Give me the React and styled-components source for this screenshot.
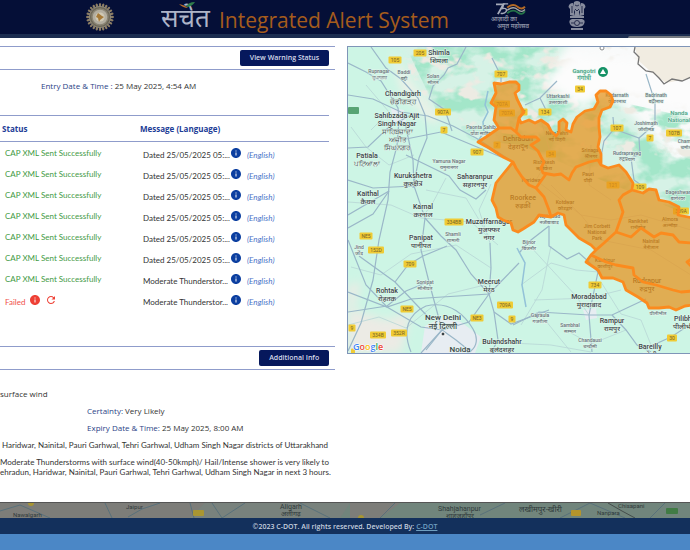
import React from 'react'
import styled, { createGlobalStyle } from 'styled-components'
import { MdInfo, MdRefresh } from 'react-icons/md'

const GlobalStyle = createGlobalStyle`
  * {
    box-sizing: border-box;
  }

  body {
    margin: 0;
    background-color: #4b87c6;
    font-family: 'Open Sans', 'Noto Sans', sans-serif;
    font-size: 8px;
    color: #333;
    overflow-x: hidden;
  }
`

const TopBar = styled.header`
  display: flex;
  align-items: flex-start;
  height: 34px;
  padding-left: 85px;
  background-color: #050f37;
`

const Brand = styled.div`
  display: flex;
  align-items: center;
  height: 34px;
  margin-left: 46px;
  gap: 8px;
`

const Title = styled.h1`
  margin: 0;
  padding-top: 5px;
  font-size: 21px;
  font-weight: 400;
  line-height: 28px;
  white-space: nowrap;
  color: #a55c1c;
`

const Campaign = styled.div`
  display: flex;
  flex-flow: column;
  width: 46px;
  margin-left: 41px;
  padding-top: 2px;
  font-size: 6px;
  font-weight: 600;
  line-height: 7px;
  white-space: nowrap;
  color: #8d93a5;
`

const CampaignLine = styled.span`
  padding-left: ${(props) => (props.$indent ? 7 : 1)}px;
`

const EmblemBox = styled.div`
  margin-left: 32px;
`

const SubBar = styled.div`
  display: flex;
  justify-content: flex-end;
  align-items: flex-end;
  height: 4px;
  background-color: #1c2d50;
`

const Tab = styled.div`
  width: 9%;
  height: 2px;
  border-top-left-radius: 2px;
  background-color: #777b82;
`

const Panel = styled.main`
  display: grid;
  grid-template-columns: minmax(0, 44fr) minmax(0, 45fr);
  column-gap: 12px;
  padding: 8px 0 24px;
  background-color: #fff;
`

const Details = styled.div`
  display: flex;
  flex-flow: column;
  overflow: hidden;
`

const Section = styled.div`
  display: flex;
  justify-content: flex-end;
  align-items: center;
  height: 24px;
  padding-right: 6px;
  border-top: 1px solid #8f9ccb;
  border-bottom: 1px solid #8f9ccb;
`

const Button = styled.button`
  height: 16px;
  padding: 0 10px;
  border: 0;
  border-radius: 2px;
  background-color: #06185c;
  font-family: inherit;
  font-size: 7px;
  font-weight: 600;
  line-height: 16px;
  white-space: nowrap;
  color: #d5daea;
  cursor: pointer;
`

const Entry = styled.div`
  padding: 11px 0 24px 41px;
  line-height: 10px;
`

const Label = styled.span`
  color: #2b3f86;
`

const StatusTable = styled.table`
  width: calc(100% - 6px);
  table-layout: fixed;
  border-collapse: collapse;
  text-align: left;
`

const HeadCell = styled.th`
  width: ${(props) => props.$width};
  height: 26px;
  padding: 0 0 0 ${(props) => (props.$first ? 2 : 0)}px;
  border-top: 1px solid #8f9ccb;
  border-bottom: 1px solid #8f9ccb;
  font-size: 8px;
  font-weight: 700;
  color: #1c3c96;
`

const Cell = styled.td`
  height: 21px;
  padding: 0 0 0 ${(props) => (props.$first ? 5 : 3)}px;
`

const CellRow = styled.div`
  display: flex;
  align-items: center;
  height: 21px;
  font-family: Lato, 'Open Sans', sans-serif;
  line-height: 10px;
  white-space: nowrap;
`

const Status = styled.span`
  padding-top: ${(props) => (props.$failed ? 4 : 0)}px;
  color: ${(props) => (props.$failed ? '#f0504a' : '#3f9a45')};
`

const Message = styled.span`
  width: 85px;
  padding-top: 4px;
`

const Language = styled.i`
  padding-top: 4px;
  color: #4a74c8;
`

const IconButton = styled.button`
  display: flex;
  padding: 0;
  margin: 0 ${(props) => (props.$failed ? 0 : 5)}px 0 ${(props) => (props.$failed ? 4 : 2)}px;
  border: 0;
  background-color: transparent;
  font-size: 12px;
  color: ${(props) => (props.$failed ? '#ee4035' : '#0c3fa0')};
  cursor: pointer;
`

const TableEnd = styled.div`
  height: 36px;
`

const Info = styled.div`
  display: flex;
  flex-flow: column;
  gap: 7px;
  padding-top: 19px;
  line-height: 10px;
  white-space: nowrap;
`

const Field = styled.div`
  padding-left: ${(props) => (props.$inset ? 87 : 0)}px;
`

const Prose = styled.div`
  padding-left: ${(props) => (props.$inset ? 2 : 0)}px;
  font-family: Lato, 'Open Sans', sans-serif;
`

const MapFrame = styled.div`
  height: 308px;
  margin-bottom: 124px;
  border: 1px solid #7f95b8;
  border-right: 0;
  overflow: hidden;
`

const MapSvg = styled.svg`
  display: block;
  width: 100%;
  height: 100%;
`

const BackdropMap = styled.div`
  height: 16px;
  border-top: 1px solid #555;
  background-color: #71857c;
`

const Footer = styled.footer`
  height: 16px;
  background-color: #13305c;
  font-size: 7px;
  text-align: center;
  font-weight: 600;
  line-height: 18px;
  color: #c5cfdf;
`

const FooterLink = styled.a`
  color: #6f9fc0;
`

const rows = [
  'Dated 25/05/2025 05:...',
  'Dated 25/05/2025 05:...',
  'Dated 25/05/2025 05:...',
  'Dated 25/05/2025 05:...',
  'Dated 25/05/2025 05:...',
  'Dated 25/05/2025 05:...',
  'Moderate Thunderstor...',
  'Moderate Thunderstor...',
]

// [x, y, size, ...lines]
const cities = [
  [438, 55, 7, 'Shimla', 'शिमला'],
  [402, 96, 7, 'Chandigarh', 'ਚੰਡੀਗੜ੍ਹ'],
  [396, 118, 7, 'Sahibzada Ajit', 'Singh Nagar', 'ਸਾਹਿਬਜ਼ਾਦਾ', 'ਅਜੀਤ', 'ਸਿੰਘ ਨਗਰ'],
  [366, 158, 7, 'Patiala', 'ਪਟਿਆਲਾ'],
  [412, 178, 7, 'Kurukshetra', 'कुरुक्षेत्र'],
  [474, 179, 7, 'Saharanpur', 'सहारनपुर'],
  [367, 196, 7, 'Kaithal', 'कैथल'],
  [422, 209, 7, 'Karnal', 'करनाल'],
  [488, 224, 7, 'Muzaffarnagar', 'मुजफ्फर', 'नगर'],
  [420, 240, 7, 'Panipat', 'पानीपत'],
  [386, 293, 7, 'Rohtak', 'रोहतक'],
  [488, 284, 7, 'Meerut', 'मेरठ'],
  [442, 320, 8, 'New Delhi', 'नई दिल्ली'],
  [459, 352, 8, 'Noida'],
  [501, 344, 7, 'Bulandshahr', 'बुलंदशहर'],
  [588, 299, 7, 'Moradabad', 'मुरादाबाद'],
  [611, 323, 7, 'Rampur', 'रामपुर'],
  [649, 349, 7, 'Bareilly', 'बरेली'],
  [684, 321, 7, 'Pilibhit', 'पीलीभीत'],
]

const towns = [
  [378, 73, 'Rupnagar', 'ਰੂਪਨਗਰ'],
  [403, 74, 'Baddi', 'बद्दी'],
  [432, 78, 'Solan', 'सोलन'],
  [480, 129, 'Paonta Sahib', 'पोंटा साहिब'],
  [448, 163, 'Yamuna Nagar', 'यमुनानगर'],
  [358, 249, 'Jind', 'जींद'],
  [452, 236, 'Shamli', 'शामली'],
  [424, 284, 'Sonipat', 'सोनीपत'],
  [528, 244, 'Bijnor', 'बिजनौर'],
  [548, 218, 'Najibabad', 'नजीबाबाद'],
  [539, 317, 'Gajraula', 'गजरौला'],
  [569, 327, 'Sambhal', 'सम्भल'],
  [589, 342, 'Chandausi', 'चन्दौसी'],
  [657, 315, 'पीलीभीत'],
  [557, 98, 'Uttarkashi', 'उत्तरकाशी'],
  [616, 97, 'Kedarnath', 'केदारनाथ'],
  [655, 97, 'Badrinath', 'बद्रीनाथ'],
  [645, 125, 'Joshimath', 'जोशीमठ'],
  [626, 155, 'Rudraprayag', 'रुद्रप्रयाग'],
  [677, 194, 'Bageshwar', 'बागेश्वर'],
  [686, 143, 'Chamoli', 'चमोली'],
]

// names that sit below the warning overlay
const coveredNames = [
  [517, 141, 7, 'Dehradun', 'देहरादून'],
  [522, 200, 7, 'Roorkee', 'रुड़की'],
  [556, 135, 5, 'New Tehri', 'नई टिहरी'],
  [543, 164, 5, 'Rishikesh', 'ऋषिकेश'],
  [590, 152, 5, 'Srinagar', 'श्रीनगर'],
  [587, 176, 5, 'Pauri', 'पौड़ी'],
  [531, 182, 5, 'Haridwar'],
  [564, 204, 5, 'Kotdwar', 'कोटद्वार'],
  [596, 228, 5, 'Jim Corbett', 'National', 'Park'],
  [637, 223, 5, 'Ranikhet', 'रानीखेत'],
  [669, 221, 5, 'Almora', 'अल्मोड़ा'],
  [650, 243, 5, 'Nainital', 'नैनीताल'],
  [604, 262, 5, 'Kashipur', 'काशीपुर'],
  [646, 283, 7, 'Rudrapur', 'रुद्रपुर'],
]

const shields = [
  [419, 53, '205'], [394, 60, '105'], [500, 74, '707'], [442, 112, '907A'],
  [443, 130, '7'], [476, 152, '907'], [579, 89, '34'], [544, 112, '134'],
  [616, 128, '107'], [649, 138, '7'], [673, 133, '107B'], [639, 187, '109'],
  [501, 104, '707A'], [506, 113, '707A'], [496, 145, '7'], [550, 154, '34'],
  [612, 185, '121'], [523, 112, '7'], [453, 222, '334BB'], [365, 236, 'NE5'],
  [375, 250, '152D'], [409, 264, '709'], [406, 309, 'NE5'], [476, 318, 'NE3'],
  [504, 305, '709A'], [511, 319, '9'], [377, 335, '334B'], [398, 333, '352R'],
  [351, 328, '9'], [352, 352, ''], [594, 285, '734'], [671, 338, '30'],
  [680, 211, '309A'],
]

const boundary =
  'M493 83 L500 84 L508 82 L515 82 L518 85 L518 90 L514 93 L516 99 L520 107 L523 112 L518 118 L520 123 L528 120 L534 123 L540 120 L547 125 L550 131 L555 136 L558 132 L558 122 L562 119 L566 123 L565 130 L570 132 L572 124 L576 117 L584 111 L593 109 L597 102 L595 95 L599 91 L605 91 L610 95 L612 101 L609 107 L601 110 L598 118 L598 127 L599 137 L597 147 L600 154 L600 165 L607 168 L618 165 L625 172 L632 183 L631 190 L642 193 L648 189 L655 190 L658 200 L668 202 L678 207 L677 215 L692 218 L692 305 L684 306 L675 310 L668 307 L658 308 L648 308 L646 303 L637 297 L625 290 L622 282 L612 278 L601 278 L597 270 L585 262 L590 255 L595 250 L590 245 L578 238 L565 225 L563 215 L557 213 L550 217 L538 215 L533 222 L522 229 L517 232 L512 230 L510 223 L502 220 L497 217 L495 208 L491 200 L495 183 L503 173 L512 162 L502 157 L488 148 L477 142 L485 137 L498 128 L493 120 L495 107 L490 103 L495 93 Z'

const districts =
  'M498 128 L510 128 L515 132 L518 118 M515 132 L520 137 L535 137 L538 140 L530 145 L537 151 L540 157 L543 162 L540 168 L542 173 L553 175 L560 174 L568 180 L571 173 L575 167 L588 162 L597 160 L600 165 M512 162 L515 168 L521 177 L528 185 L535 188 L540 181 L545 174 M535 188 L543 197 L548 210 L550 217 M631 190 L622 195 L618 200 L622 212 L615 232 L603 243 L595 250 M615 232 L630 237 L640 228 L653 237 L660 233 L672 235 L678 242 L692 243 M590 255 L605 262 L615 265 L632 268 L633 275 L642 282 L655 285 L672 290 L680 292 L692 291 M692 258 L686 262 L692 268'

const roads = [
  'M347 63 L365 72 L380 81 L397 108 L398 118',
  'M347 95 L372 99 L400 112 L427 116 L452 126 L475 138 L512 162',
  'M370 47 L385 68 L400 79 L417 98 L424 115 L426 138 L418 158 L412 188',
  'M398 120 L396 146 L389 172 L387 200 L378 240 L372 280 L360 323 L347 351',
  'M404 123 L412 160 L413 186 L424 218 L420 250 L428 282 L441 330',
  'M424 218 L440 236 L455 250 L470 274 L488 294 L493 312 L497 340',
  'M488 294 L468 322 L441 330 L425 350 M488 294 L518 263',
  'M489 243 L490 268 L488 294 L410 299 L386 307 L347 292',
  'M347 228 L372 214 L388 191 M347 240 L365 285 L386 307 L420 327 L441 330',
  'M347 312 L386 306 L405 291 L427 282 M358 256 L394 282 L430 320',
  'M394 282 L407 265 L422 256 L446 246 M347 180 L372 188 L413 186',
  'M347 148 L367 147 L388 127 L410 115 M400 140 L440 132',
  'M410 352 C401 330 407 314 425 306 C450 300 465 317 472 329 S474 350 466 353',
  'M512 325 L538 312 L588 315 L611 315 L645 299 M588 315 L591 352',
  'M611 315 L625 330 L636 345 L650 352 M650 346 L670 337 L690 324',
  'M548 226 L548 246 L566 259 L578 253 L588 262 L597 272 L588 315',
  'M548 226 L530 240 L518 253 M493 312 L510 324 L548 310',
  'M465 47 L456 64 L447 68 L443 75 L432 86 L428 99 L444 110 L451 131',
  'M491 58 L500 76 L500 82 M524 105 L539 98 L556 81 M539 98 L548 116',
  'M612 117 L613 129 L603 141 L600 157 M613 129 L638 138 L654 124 L654 102 L645 74',
  'M638 138 L639 154 L630 158 L633 180 L647 190',
  'M388 191 L347 215 M440 132 L500 157 M405 155 L448 176 L459 190 L475 199 L485 190',
  'M497 340 L490 353 M441 330 L455 340 L470 352 M441 330 L420 353',
]

const minorRoads =
  'M347 202 L390 205 L420 218 L470 222 L497 245 M350 267 L380 275 L410 254 L455 245 L490 268 M425 190 L465 198 L490 240 M347 325 L378 317 L405 328 L447 294 L500 281 M528 245 L575 296 L588 315 M520 285 L550 263 L575 270 L597 272 M550 246 L541 290 L520 325 M600 282 L620 314 L640 320 L650 345 M570 333 L590 344 L625 330 M350 127 L365 147 L388 165 L413 155 M445 178 L430 206 L420 218 M365 85 L388 112 L370 130 M533 300 L588 298 L620 290 M540 315 L570 352 M510 343 L550 345 L590 352 M490 184 L478 210 L489 243 M550 185 L580 215 L610 220 L640 215 L690 230 M540 120 L550 155 L535 180 L580 215 M580 215 L600 240 L650 250 L690 275 M590 145 L588 185 L610 200'

function Wheel() {
  const spokes = Array.from({ length: 24 }, (_, i) => i * 15)
  return (
    <svg width="30" height="34" viewBox="-15 -17 30 34" aria-hidden="true">
      {spokes.map((angle) => (
        <ellipse
          key={angle}
          cx="0"
          cy="-12"
          rx="1.2"
          ry="2"
          fill="#8c7d64"
          transform={`rotate(${angle})`}
        />
      ))}
      <circle r="10.6" fill="#6d6858" stroke="#8f897a" strokeWidth="1" />
      <circle r="8" fill="#b3aea0" stroke="#8a8474" strokeWidth="1.4" />
      <circle r="4.6" fill="#d0c9b4" />
      <path d="M-2 -4 L2 -1 L4 0 L0 3 L-1 5 L-2 1 L-4 0 Z" fill="#a67a38" />
    </svg>
  )
}

function SachetLogo() {
  return (
    <svg width="50" height="34" viewBox="0 0 50 34" role="img" aria-label="सचेत">
      <text x="0" y="27" fontSize="26" fill="#aeb4c8" fontFamily="Noto Sans, sans-serif">
        सचेत
      </text>
      <path d="M18 4 Q24 5 27 8 Q22 8 18 4Z" fill="#b36a2c" />
      <path d="M25 7 Q27 2 34 2 Q31 7 25 7Z" fill="#2f7d4b" />
    </svg>
  )
}

function AzadiMark() {
  return (
    <svg width="40" height="14" viewBox="0 0 40 15" aria-hidden="true">
      <path d="M5 2.500 H13 L7 13" fill="none" stroke="#a6abba" strokeWidth="2" />
      <path d="M18 2 H13 L12 7 Q17 6 16 10 Q14 13 10 12" fill="none" stroke="#a6abba" strokeWidth="1.500" />
      <path d="M17 6 Q23 1 28 5 T36 5" fill="none" stroke="#b46a25" strokeWidth="2" />
      <path d="M17 9 Q23 4 28 8 T36 8" fill="none" stroke="#a9aaa8" strokeWidth="1.500" />
      <path d="M17 12 Q23 7 28 11 T36 10" fill="none" stroke="#247348" strokeWidth="2" />
    </svg>
  )
}

function Emblem() {
  return (
    <svg width="18" height="32" viewBox="0 0 18 32" aria-hidden="true">
      <g fill="#878c9e">
        <path d="M6 2 Q9 0 12 2 L13 7 L11 12 L12 16 H6 L7 12 L5 7Z" />
        <path d="M5 3 Q1 3 0.500 7 L2 9 L2 15 L6 16 L6 8Z" />
        <path d="M13 3 Q17 3 17.500 7 L16 9 L16 15 L12 16 L12 8Z" />
        <rect x="2" y="16" width="14" height="2" />
        <path d="M4 19 Q0 20 2 24 Q3 27 9 27 Q15 27 16 24 Q18 20 14 19Z" />
        <rect x="3" y="28" width="12" height="2" />
      </g>
      <g stroke="#10183b" strokeWidth="0.800" fill="none">
        <path d="M7 5 L9 6 L11 5 M7 9 L9 11 L11 9 M4 6 V13 M14 6 V13" />
        <circle cx="9" cy="23" r="2.500" />
        <path d="M3 23 H6 M12 23 H15" />
      </g>
    </svg>
  )
}

function MapLabel({ x, y, size, lines, color, halo = '#e3f5ed' }) {
  return (
    <text
      textAnchor="middle"
      fontSize={size}
      fontWeight="500"
      fontFamily="Roboto, Noto Sans, sans-serif"
      fill={color}
      stroke={halo}
      strokeWidth="1"
      paintOrder="stroke"
    >
      {lines.map((line, i) => (
        <tspan key={i} x={x} y={y + i * (size + 1)}>
          {line}
        </tspan>
      ))}
    </text>
  )
}

function Shield({ x, y, label }) {
  const width = label.length * 3 + 4
  return (
    <g>
      <rect x={x - width / 2} y={y - 3.5} width={width} height="7" rx="1" fill="#f0cb35" />
      <text
        x={x}
        y={y + 2}
        fontSize="5"
        fontFamily="Roboto, sans-serif"
        fill="#756427"
        textAnchor="middle"
      >
        {label}
      </text>
    </g>
  )
}

function WarningMap() {
  return (
    <MapSvg viewBox="347 47 343 306" preserveAspectRatio="xMinYMin slice">
      <defs>
        <filter id="forest" x="0" y="0" width="1" height="1" colorInterpolationFilters="sRGB">
          <feTurbulence type="fractalNoise" baseFrequency="0.03 0.045" numOctaves="4" seed="8" />
          <feColorMatrix values="0 0 0 0 0.64  0 0 0 0 0.9  0 0 0 0 0.79  5 0 0 0 -2.2" />
          <feComposite operator="in" in2="SourceGraphic" />
        </filter>
        <filter id="ridge" x="0" y="0" width="1" height="1" colorInterpolationFilters="sRGB">
          <feTurbulence type="fractalNoise" baseFrequency="0.05 0.07" numOctaves="3" seed="21" />
          <feColorMatrix values="0 0 0 0 0.93  0 0 0 0 0.92  0 0 0 0 0.89  0 7 0 0 -3.9" />
          <feComposite operator="in" in2="SourceGraphic" />
        </filter>
        <filter id="snow" x="-0.1" y="-0.1" width="1.2" height="1.2">
          <feGaussianBlur stdDeviation="5" />
        </filter>
      </defs>
      <rect x="347" y="47" width="343" height="306" fill="#cdf5e5" />
      <path d="M396 40 L700 40 V220 L600 180 L520 145 L470 140 L430 112Z" fill="#d6f2e6" filter="url(#snow)" />
      <path d="M570 40 H700 V190 L650 135 L605 90 L545 75Z" fill="#f9fafa" filter="url(#snow)" />
      <path d="M405 47 L575 47 L610 100 L700 120 V220 L600 180 L520 145 L470 140 L440 120Z" fill="#000" filter="url(#forest)" />
      <path d="M396 47 H700 V160 L600 150 L520 135 L470 130 L430 112Z" fill="#000" filter="url(#ridge)" />
      <path d="M540 82 L570 55 L640 60 L700 85 V115 L655 104 L610 92 L580 108Z" fill="#fcfcfc" filter="url(#snow)" />
      <path d="M634 47 L637 60 L650 72 L665 83 L690 78 V47Z" fill="#f1ece1" />
      <path d="M347 285 L360 282 L352 310 L385 320 L410 312 L400 353 H347Z" fill="#ecebe5" filter="url(#snow)" />
      <path d="M390 50 L420 95 L440 120 L430 124 L400 90Z" fill="#edf1e8" filter="url(#snow)" />
      <path d="M424 326 L440 318 L460 322 L480 337 L474 353 H420Z" fill="#e7edf2" />
      <path d="M390 108 L403 110 L405 122 L392 124Z M582 310 L595 308 L596 318 L585 320Z" fill="#e7edf2" />
      <path
        d={minorRoads}
        fill="none"
        stroke="#b7d6d5"
        strokeWidth="0.800"
      />
      {roads.map((d) => (
        <path key={d} d={d} fill="none" stroke="#9ab7c8" strokeWidth="1.200" />
      ))}
      <path
        d="M487 91 L484 105 L487 112 L482 122 L483 132 L477 141 M516 248 L524 263 L521 285 L525 307"
        fill="none"
        stroke="#93c2d8"
        strokeWidth="1.500"
      />
      <path
        d="M634 47 L633 52 L638 57 L637 64 L645 71 L652 72 L658 78 L663 84 L671 79 L681 81 L690 77"
        fill="none"
        stroke="#777"
        strokeWidth="1.300"
      />
      <circle cx="601" cy="48" r="2" fill="#fff" stroke="#888" />

      {coveredNames.map(([x, y, size, ...lines]) => (
        <MapLabel key={lines[0]} x={x} y={y} size={size} lines={lines} color="#3c4042" halo="none" />
      ))}
      {shields.map(([x, y, label]) => (
        <Shield key={`${x}-${y}`} x={x} y={y} label={label} />
      ))}
      <rect x="347" y="107" width="11" height="7" rx="1" fill="#58a474" />
      {towns.map(([x, y, ...lines]) => (
        <MapLabel key={`${x}-${y}`} x={x} y={y} size={5} lines={lines} color="#68747a" />
      ))}
      {cities.map(([x, y, size, ...lines]) => (
        <MapLabel key={lines[0]} x={x} y={y} size={size} lines={lines} color="#3b4548" />
      ))}
      <MapLabel x={583} y={73} size={6} lines={['Gangotri', 'गंगोत्री']} color="#3a9c7c" />
      <MapLabel x={678} y={115} size={6} lines={['Nanda', 'National']} color="#4aa386" />
      <circle cx="602" cy="72" r="5" fill="#159266" />
      <path d="M599 74 L602 69 L605 74Z" fill="#fff" />

      <path d={boundary} fill="#e8921a" fillOpacity="0.72" />
      <path
        d={`${boundary} ${districts}`}
        fill="none"
        stroke="#fb8b1e"
        strokeWidth="2.800"
        strokeLinejoin="round"
      />
      <circle cx="442" cy="334" r="2" fill="#3b4548" stroke="#fff" />
      <text x="352" y="350" fontSize="9" fontWeight="600" fontFamily="Open Sans, sans-serif" stroke="#fff" strokeWidth="1" paintOrder="stroke">
        <tspan fill="#4285f4">G</tspan>
        <tspan fill="#ea4335">o</tspan>
        <tspan fill="#fbbc05">o</tspan>
        <tspan fill="#4285f4">g</tspan>
        <tspan fill="#34a853">l</tspan>
        <tspan fill="#ea4335">e</tspan>
      </text>
    </MapSvg>
  )
}

function StripLabel({ x, y, size = 7, children }) {
  return (
    <text x={x} y={y} fontSize={size} fontFamily="Roboto, Noto Sans, sans-serif" fill="#303a3b">
      {children}
    </text>
  )
}

function StripMap() {
  return (
    <MapSvg viewBox="0 0 690 15" preserveAspectRatio="xMinYMin slice">
      <path d="M0 0 H205 L190 15 H0Z M350 0 H400 L380 15 H350Z" fill="#7d7d79" />
      <path d="M205 0 H350 L340 15 H190Z" fill="#79827d" />
      <path
        d="M0 8 L20 2 L50 15 M105 0 L112 15 M128 14 L142 6 L160 0 M190 0 L194 15 M212 0 L222 15 L245 0 M300 0 L330 15 M380 15 L395 0 M480 12 L505 0 M560 15 L590 0 L625 15 M650 15 L665 0"
        fill="none"
        stroke="#59717b"
      />
      <path d="M608 0 L622 8 L635 15" fill="none" stroke="#454d4c" />
      <StripLabel x={13} y={14} size={6}>Nawalgarh</StripLabel>
      <StripLabel x={126} y={6} size={6}>Jaipur</StripLabel>
      <StripLabel x={280} y={6}>Aligarh</StripLabel>
      <StripLabel x={281} y={13}>अलीगढ़</StripLabel>
      <StripLabel x={438} y={8}>Shahjahanpur</StripLabel>
      <StripLabel x={446} y={15}>शाहजहाँपुर</StripLabel>
      <StripLabel x={519} y={9} size={8}>लखीमपुर-खीरी</StripLabel>
      <StripLabel x={597} y={12} size={6}>Nanpara</StripLabel>
      <StripLabel x={618} y={5} size={6}>Chisapani</StripLabel>
      <rect x="193" y="7" width="11" height="6" rx="1" fill="#a99632" />
      <rect x="571" y="7" width="10" height="6" rx="1" fill="#b5952c" />
      <rect x="666" y="5" width="12" height="6" rx="1" fill="#417b45" />
      <circle cx="31" cy="0" r="3" fill="#a99632" />
      <circle cx="361" cy="15" r="3" fill="#a99632" />
    </MapSvg>
  )
}

function StatusRow({ message, failed }) {
  return (
    <tr>
      <Cell $first>
        <CellRow>
          <Status $failed={failed}>
            {failed ? 'Failed' : 'CAP XML Sent Successfully'}
          </Status>
          {failed && (
            <>
              <IconButton $failed aria-label="Failure reason">
                <MdInfo />
              </IconButton>
              <IconButton $failed aria-label="Retry">
                <MdRefresh />
              </IconButton>
            </>
          )}
        </CellRow>
      </Cell>
      <Cell>
        <CellRow>
          <Message>{message}</Message>
          <IconButton aria-label="Show message">
            <MdInfo />
          </IconButton>
          <Language>(English)</Language>
        </CellRow>
      </Cell>
    </tr>
  )
}

export default function App() {
  return (
    <>
      <GlobalStyle />
      <TopBar>
        <Wheel />
        <Brand>
          <SachetLogo />
          <Title>Integrated Alert System</Title>
        </Brand>
        <Campaign>
          <AzadiMark />
          <CampaignLine>आज़ादी का</CampaignLine>
          <CampaignLine $indent>अमृत महोत्सव</CampaignLine>
        </Campaign>
        <EmblemBox>
          <Emblem />
        </EmblemBox>
      </TopBar>
      <SubBar>
        <Tab />
      </SubBar>
      <Panel>
        <Details>
          <Section>
            <Button>View Warning Status</Button>
          </Section>
          <Entry>
            <Label>Entry Date &amp; Time :</Label> 25 May 2025, 4:54 AM
          </Entry>
          <StatusTable>
            <thead>
              <tr>
                <HeadCell $first $width="140px">Status</HeadCell>
                <HeadCell>Message (Language)</HeadCell>
              </tr>
            </thead>
            <tbody>
              {rows.map((message, i) => (
                <StatusRow key={i} message={message} failed={i === rows.length - 1} />
              ))}
            </tbody>
          </StatusTable>
          <TableEnd />
          <Section>
            <Button>Additional Info</Button>
          </Section>
          <Info>
            <Field>surface wind</Field>
            <Field $inset>
              <Label>Certainty:</Label> Very Likely
            </Field>
            <Field $inset>
              <Label>Expiry Date &amp; Time:</Label> 25 May 2025, 8:00 AM
            </Field>
            <Prose $inset>
              Haridwar, Nainital, Pauri Garhwal, Tehri Garhwal, Udham Singh Nagar
              districts of Uttarakhand
            </Prose>
            <Prose>
              Moderate Thunderstorms with surface wind(40-50kmph)/ Hail/Intense
              shower is very likely to
              <br />
              ehradun, Haridwar, Nainital, Pauri Garhwal, Tehri Garhwal, Udham
              Singh Nagar in next 3 hours.
            </Prose>
          </Info>
        </Details>
        <MapFrame>
          <WarningMap />
        </MapFrame>
      </Panel>
      <BackdropMap>
        <StripMap />
      </BackdropMap>
      <Footer>
        ©2023 C-DOT. All rights reserved. Developed By:{' '}
        <FooterLink href="#">C-DOT</FooterLink>
      </Footer>
    </>
  )
}
